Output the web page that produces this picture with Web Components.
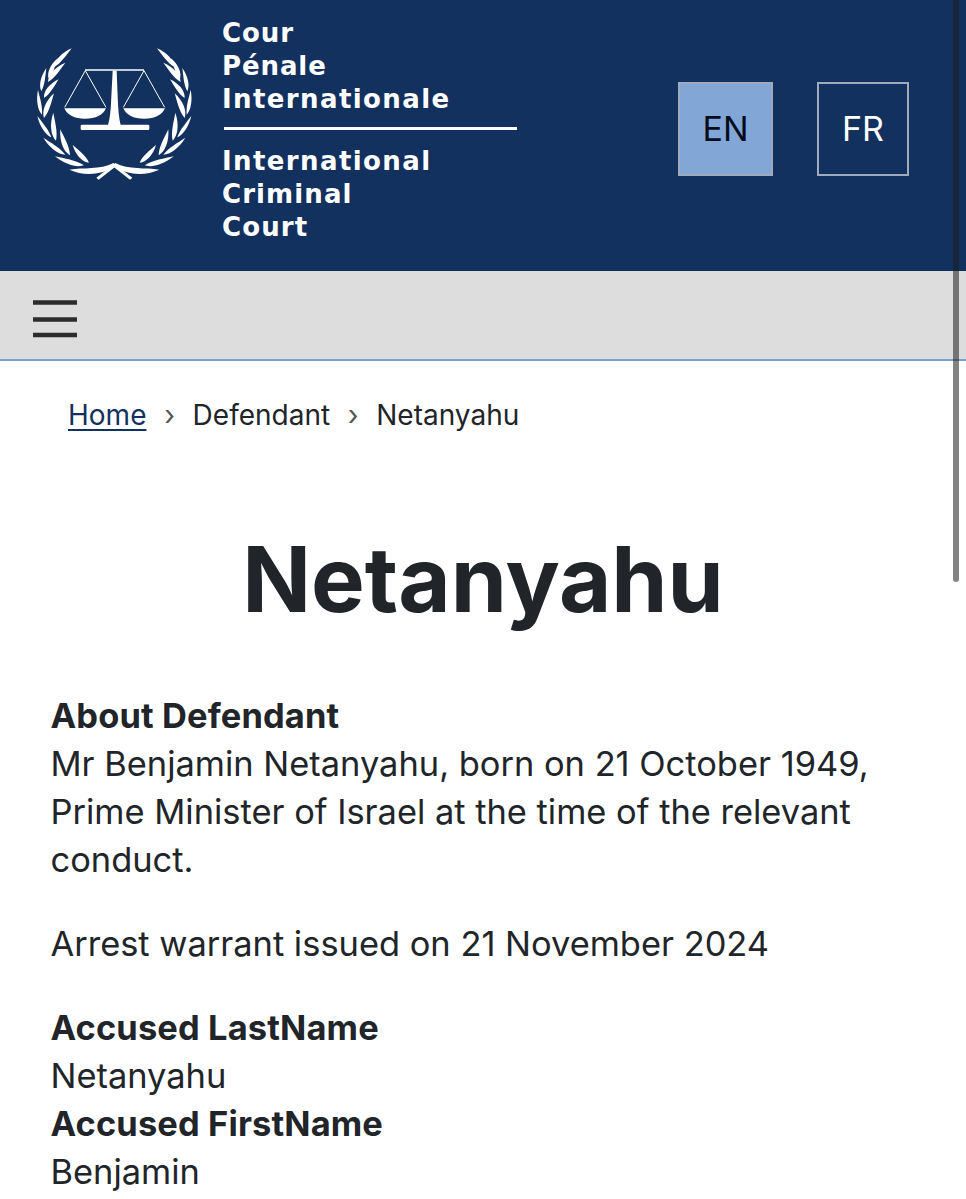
<!DOCTYPE html>
<html lang="en"><head><meta charset="utf-8"><title>Netanyahu</title>
<style>
html,body{margin:0;padding:0;height:1199px;overflow:hidden;background:#fff}
body{font-family:Inter,"Liberation Sans",sans-serif;color:#212529}
icc-article b{letter-spacing:.14px}
</style></head><body>
<icc-header></icc-header>
<icc-nav></icc-nav>
<icc-breadcrumb><a href="#">Home</a><span>Defendant</span><span>Netanyahu</span></icc-breadcrumb>
<icc-title>Netanyahu</icc-title>
<icc-article>
<p><b>About Defendant</b><br>Mr Benjamin Netanyahu, born on 21 October 1949, Prime Minister of Israel at the time of the relevant conduct.</p>
<p>Arrest warrant issued on 21 November 2024</p>
<p><b>Accused LastName</b><br>Netanyahu<br><b>Accused FirstName</b><br>Benjamin</p>
</icc-article>
<icc-scrollbar></icc-scrollbar>
<script>
function def(name, html, build){
  customElements.define(name, class extends HTMLElement{
    constructor(){super();const r=this.attachShadow({mode:'open'});r.innerHTML=html;if(build)build(r);}
  });
}
function leaf(b,t,w){
  const [x0,y0]=b,[x1,y1]=t,dx=x1-x0,dy=y1-y0,nx=-dy/Math.hypot(dx,dy),ny=dx/Math.hypot(dx,dy);
  const p=(f,o)=>`${(x0+dx*f+nx*o).toFixed(1)} ${(y0+dy*f+ny*o).toFixed(1)}`;
  return `M${x0} ${y0}C${p(.2,w*.75)} ${p(.6,w*.8)} ${x1} ${y1}C${p(.7,-w*.1)} ${p(.3,-w*.45)} ${x0} ${y0}Z`;
}
const LEAVES=[
 [[102,112],[155,55],-17],[[86,146],[113,85],-16],[[64,184],[79,114],-15],[[66,254],[54,179],-14],
 [[94,322],[52,258],-14],[[136,374],[70,323],-16],[[192,406],[105,379],-18],
 [[84,156],[136,98],-18],[[72,204],[116,148],-18],[[72,264],[102,190],-19],[[108,332],[100,248],-19],
 [[150,376],[121,298],-19],[[207,398],[158,345],-18]
];
def('icc-logo',`<style>:host{display:block;width:190px;height:160px}svg{display:block}</style>
<svg width="190" height="160" viewBox="0 0 570 480" fill="#fff" role="img" aria-label="ICC emblem">
<g id="w"></g>
<path d="M195 120H372" stroke="#fff" stroke-width="4"/>
<path d="M278 122H290L293 200Q295 260 302 285H264Q272 260 274 200Z"/>
<rect x="182" y="284" width="206" height="16" rx="4"/>
<path d="M196 122L134 232M196 122L258 232M372 122L310 232M372 122L434 232" stroke="#fff" stroke-width="3" fill="none"/>
<path d="M133 235H258Q244 266 195 266Q147 266 133 235Z"/>
<path d="M310 235H435Q421 266 372 266Q324 266 310 235Z"/>
<path d="M148 419C190 412 240 420 280 399L337 443L330 449L282 412C240 436 190 438 148 419Z"/>
<path d="M418 419C376 412 326 420 286 399L229 443L236 449L284 412C326 436 376 438 418 419Z"/>
</svg>`,r=>{
  const g=r.getElementById('w');let d='';
  const mir=p=>[566-p[0],p[1]];
  LEAVES.forEach(([b,t,w])=>{d+=leaf(b,t,w);d+=leaf(mir(b),mir(t),-w);});
  g.innerHTML=`<path d="${d}"/>`;
});
def('icc-wordmark',`<style>
:host{display:block;width:295px;font:700 26px/33px "DejaVu Sans",sans-serif;color:#fff;letter-spacing:0.9px;padding-top:1px}
span{display:block}
.wide{letter-spacing:1.4px}.mid{letter-spacing:1.4px}.c{letter-spacing:1.1px}
hr{border:0;height:3px;background:#fff;margin:11px 0 15px 2px}
</style><span>Cour</span><span>Pénale</span><span class="wide">Internationale</span><hr><span class="mid">International</span><span class="c">Criminal</span><span class="c">Court</span>`);
def('icc-lang',`<style>
:host{display:flex;align-items:center;justify-content:center;box-sizing:border-box;height:94px;border:2px solid #a0aabb;padding-bottom:2px;font:400 34px Inter,sans-serif;color:#fff}
:host([active]){background:#82a7d7;color:#050d1d}
</style><slot></slot>`);
def('icc-header',`<style>
:host{display:flex;box-sizing:border-box;height:271px;background:#13315f;padding:16px 57px 0 20px}
.brand{display:flex;gap:12px;height:240px}
icc-logo{margin-top:14px}
.langs{margin-left:auto;display:flex;gap:44px;margin-top:66px}
#en{width:95px}#fr{width:92px}
</style><div class="brand"><icc-logo></icc-logo><icc-wordmark></icc-wordmark></div>
<div class="langs"><icc-lang id="en" active>EN</icc-lang><icc-lang id="fr">FR</icc-lang></div>`);
def('icc-nav',`<style>
:host{display:flex;align-items:center;box-sizing:border-box;height:90px;background:#ddd;border-bottom:2px solid #7ba1d2;padding:7px 0 0 33px}
svg{display:block}
</style><svg width="44" height="40" viewBox="0 0 44 40" aria-label="Menu"><path d="M0 3.500H44M0 20.500H44M0 36H44" stroke="#2c2c2c" stroke-width="4.500"/></svg>`);
def('icc-breadcrumb',`<style>
:host{display:flex;box-sizing:border-box;height:110px;padding:35px 0 0 68px;font:400 28px/38px Inter,sans-serif;color:#212529}
::slotted(a){color:#13315f;text-decoration:underline;text-underline-offset:4px}
::slotted(*:not(:first-child))::before{content:"›";color:#555;margin:0 17.700px}
</style><slot></slot>`);
def('icc-title',`<style>
:host{display:block;text-align:center;font:700 90.300px/106px Inter,sans-serif;color:#212529;padding-top:56px}
</style><slot></slot>`);
def('icc-article',`<style>
:host{display:block;padding:0 50.500px;margin-top:59px;font:400 34.430px/48px Inter,sans-serif;color:#212529}
::slotted(p){margin:0 0 36px}
</style><slot></slot>`);
def('icc-scrollbar',`<style>
:host{position:fixed;top:-4px;right:7px;width:6px;height:586px;border-radius:3px;background:rgba(30,30,30,.55)}
</style>`);
</script>
</body></html>
